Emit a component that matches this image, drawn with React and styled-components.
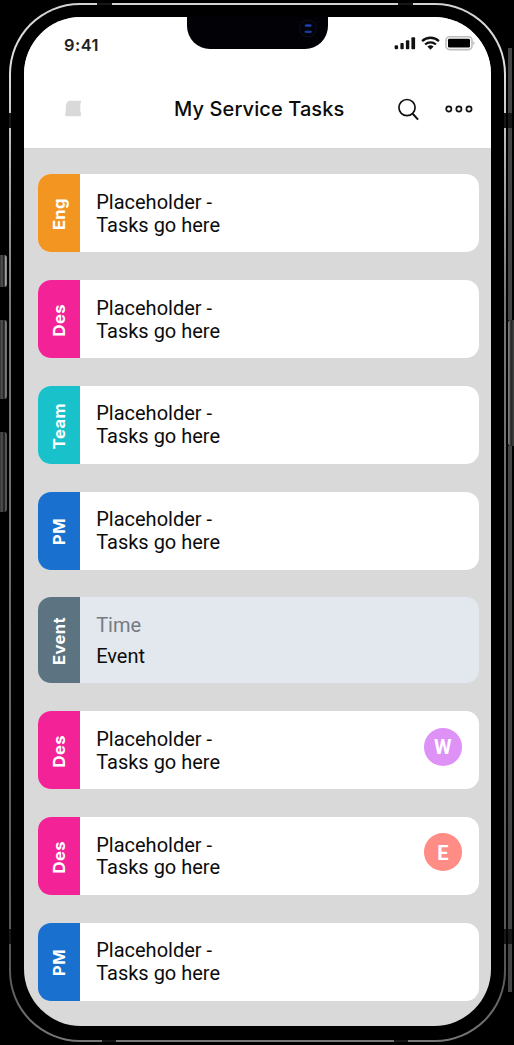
import React from "react";
import styled, { createGlobalStyle } from "styled-components";

const GlobalStyle = createGlobalStyle`
  * { box-sizing: border-box; }
  body { margin: 0; background: #000; font-family: Roboto, "Liberation Sans", sans-serif; }
`;

const Stage = styled.main`
  display: grid;
  grid-template-columns: 9px 497px 8px;
  width: 514px;
  height: 1045px;
  background: #000;
  overflow: hidden;
`;

const Bezel = styled.div`
  height: 1039px;
  margin-top: 3px;
  padding: 2px;
  border-radius: 71px;
  background:
    linear-gradient(#171717, #171717) 88px 0 / 15px 3px no-repeat,
    linear-gradient(#171717, #171717) 389px 0 / 15px 3px no-repeat,
    linear-gradient(#171717, #171717) 0 110px / 100% 15px no-repeat,
    linear-gradient(#171717, #171717) 0 926px / 100% 15px no-repeat,
    linear-gradient(#171717, #171717) 93px 100% / 14px 3px no-repeat,
    linear-gradient(#171717, #171717) 385px 100% / 14px 3px no-repeat,
    linear-gradient(180deg, #d2d2d2 0, #e2e2e2 60px, #aaa 170px, #777 300px, #666 700px, #555 960px, #777 100%);
`;

const Body = styled.div`
  height: 1035px;
  padding: 12px 13.5px 14px 13px;
  border-radius: 69px;
  background: #000;
`;

const Screen = styled.div`
  height: 1009px;
  border-radius: 57px;
  background: #d9d9d9;
  overflow: hidden;
`;

const LeftSide = styled.div`
  display: flex;
  flex-direction: column;
  gap: 33px;
  padding: 255px 2px 0 0;
`;

const RightSide = styled.div`
  display: flex;
  flex-direction: column;
  padding: 48px 0 53px 2px;
`;

const VolumeKey = styled.div`
  height: ${(p) => p.$height}px;
  border-radius: 0 3px 3px 0;
  background: linear-gradient(90deg, #303030 0, #555 2px, #151515 4px, ${(p) => p.$shine} 6px, #444);
`;

const PowerKey = styled.div`
  height: 126px;
  border-radius: 3px 0 0 3px;
  background: linear-gradient(90deg, #777 0 1px, #222 3px, #444);
`;

const Rail = styled.div`
  flex: ${(p) => p.$grow || "1"};
  height: ${(p) => p.$height}px;
  width: 4px;
  background: #444;
`;

const RailGap = styled.div`
  height: 15px;
  width: 4px;
  background: #171717;
`;

const Top = styled.header`
  height: 131.5px;
  background: #fff;
  border-bottom: 1px solid #d4d4d4;
`;

const StatusBar = styled.div`
  height: 56px;
  display: grid;
  grid-template-columns: 163px 141px 1fr;
  align-items: start;
`;

const Notch = styled.div`
  height: 32px;
  padding: 2px 11px 0 0;
  display: flex;
  justify-content: flex-end;
  border-radius: 0 0 23px 23px;
  background: #010106;
`;

const Clock = styled.time`
  padding: 17px 0 0 40px;
  font: 600 16.4px/22px Inter, sans-serif;
  letter-spacing: 0.5px;
  color: #222;
`;

const Signals = styled.div`
  display: flex;
  justify-content: flex-end;
  padding: 17px 16px 0 0;
`;

const TitleBar = styled.div`
  height: 72px;
  display: grid;
  grid-template-columns: 150px 171px 1fr;
  align-items: center;
`;

const Title = styled.h1`
  margin: 0;
  font: 500 20px/28px Inter, sans-serif;
  letter-spacing: 0.1px;
  white-space: nowrap;
  color: #0b0b0b;
`;

const Ghost = styled.svg`
  margin: 0 0 1px 40px;
`;

const Actions = styled.div`
  display: flex;
  justify-content: flex-end;
  align-items: center;
  gap: 24.5px;
  padding: 0 18px 0 0;
`;

const List = styled.section`
  display: flex;
  flex-direction: column;
  gap: 27.8px;
  padding: 25.8px 11.5px 0 14px;
`;

const Card = styled.article`
  display: flex;
  height: ${(p) => (p.$event ? 86 : 78)}px;
  border-radius: 13px;
  overflow: hidden;
  background: ${(p) => (p.$event ? "#e2e8ee" : "#fff")};
`;

const Tag = styled.div`
  width: 41.5px;
  flex: none;
  display: flex;
  align-items: center;
  justify-content: center;
  padding-top: 2px;
  background: ${(p) => p.$color};
`;

const TagText = styled.span`
  writing-mode: vertical-rl;
  transform: rotate(180deg);
  font: 700 16.6px/20px Inter, sans-serif;
  letter-spacing: 0.4px;
  color: #fff;
`;

const Copy = styled.div`
  flex: 1;
  padding: 16.5px 0 0 16.7px;
  font-size: 20px;
  line-height: 22.9px;
  white-space: pre-line;
  color: #0c0c0c;
`;

const EventTime = styled.div`
  margin-bottom: 8px;
  color: #757b81;
`;

const Avatar = styled.div`
  width: 38.5px;
  height: 38px;
  margin: 16.4px 17px 0 0;
  padding-top: 1px;
  border-radius: 50%;
  display: flex;
  align-items: center;
  justify-content: center;
  background: ${(p) => p.$color};
  color: #fff;
  font-size: 20px;
  font-weight: 700;
`;

const ORANGE = "#f39521";
const PINK = "#f32297";
const BLUE = "#1970ce";

const tasks = [
  { tag: "Eng", color: ORANGE },
  { tag: "Des", color: PINK },
  { tag: "Team", color: "#19c2cb" },
  { tag: "PM", color: BLUE },
  { tag: "Event", color: "#5c7482", event: true },
  { tag: "Des", color: PINK, avatar: "W", avatarColor: "#df92f6" },
  { tag: "Des", color: PINK, avatar: "E", avatarColor: "#ff8c85" },
  { tag: "PM", color: BLUE },
];

function StatusIcons() {
  return (
    <svg width="81" height="20" viewBox="0 0 81 20">
      <g fill="#111">
        <rect x="0.6" y="11.2" width="3.5" height="4" rx="1.3" />
        <rect x="6.4" y="9" width="3.3" height="6.2" rx="1" />
        <rect x="11.9" y="6.2" width="3.4" height="9" rx="1" />
        <rect x="17.4" y="3.2" width="3.7" height="12" rx="1" />
      </g>
      <g fill="none" stroke="#111" strokeWidth="2.3">
        <path d="M28.1 7.1a12.2 12.2 0 0 1 16.8 0" />
        <path d="M31.1 10.5a8 8 0 0 1 10.8 0" />
      </g>
      <path d="M33.4 12.6a4.7 4.7 0 0 1 6.2 0L36.5 15.8z" fill="#111" />
      <rect x="52" y="2.8" width="26" height="12.8" rx="3.6" fill="#fff" stroke="#bdbdbd" strokeWidth="1.6" />
      <rect x="54" y="4.8" width="22" height="8.8" rx="1.4" fill="#000" />
      <path d="M79.4 7.2c1.5.7 1.5 3.1 0 3.8z" fill="#aaa" />
    </svg>
  );
}

function SearchIcon() {
  return (
    <svg width="23" height="24" viewBox="0 0 23 24" fill="none" stroke="#111" strokeWidth="1.7">
      <circle cx="10" cy="10.6" r="8.1" />
      <path d="M15.7 16.7 21.1 22.6" strokeWidth="2" />
    </svg>
  );
}

function MoreIcon() {
  return (
    <svg width="28" height="10" viewBox="0 0 28 10" fill="none" stroke="#111" strokeWidth="1.7">
      <circle cx="3.8" cy="5" r="2.6" />
      <circle cx="13.9" cy="5" r="2.6" />
      <circle cx="24" cy="5" r="2.6" />
    </svg>
  );
}

function TaskCard({ task }) {
  return (
    <Card $event={task.event}>
      <Tag $color={task.color}>
        <TagText>{task.tag}</TagText>
      </Tag>
      <Copy>
        {task.event ? (
          <>
            <EventTime>Time</EventTime>
            Event
          </>
        ) : (
          "Placeholder -\nTasks go here"
        )}
      </Copy>
      {task.avatar && <Avatar $color={task.avatarColor}>{task.avatar}</Avatar>}
    </Card>
  );
}

export default function App() {
  return (
    <Stage>
      <GlobalStyle />
      <LeftSide>
        <VolumeKey $height={32} $shine="#ccc" />
        <VolumeKey $height={79} $shine="#999" />
        <VolumeKey $height={80} $shine="#666" />
      </LeftSide>
      <Bezel>
        <Body>
          <Screen>
            <Top>
              <StatusBar>
                <Clock>9:41</Clock>
                <Notch>
                  <svg width="18" height="19" viewBox="0 0 18 19">
                    <circle cx="9" cy="9.5" r="8.5" fill="#02020a" stroke="#11111b" />
                    <ellipse cx="9.2" cy="6.5" rx="3.6" ry="1.3" fill="#1d46b4" />
                    <ellipse cx="9.2" cy="12.8" rx="3.8" ry="1.3" fill="#183a98" />
                  </svg>
                </Notch>
                <Signals>
                  <StatusIcons />
                </Signals>
              </StatusBar>
              <TitleBar>
                <Ghost width="18" height="17" viewBox="0 0 18 17">
                  <path
                    d="M5 .8H17l-.3 2.2-.4 1.8v6l.7 2.4-.2 3H2.2L.8 15l.8-3 .2-5 .2-2 .8-2.6z"
                    fill="#d9d9d9"
                  />
                </Ghost>
                <Title>My Service Tasks</Title>
                <Actions>
                  <SearchIcon />
                  <MoreIcon />
                </Actions>
              </TitleBar>
            </Top>
            <List>
              {tasks.map((task, i) => (
                <TaskCard key={i} task={task} />
              ))}
            </List>
          </Screen>
        </Body>
      </Bezel>
      <RightSide>
        <Rail $grow="none" $height={65} />
        <RailGap />
        <Rail />
        <PowerKey />
        <Rail $grow="none" $height={483} />
        <RailGap />
        <Rail $grow="none" $height={48} />
      </RightSide>
    </Stage>
  );
}
